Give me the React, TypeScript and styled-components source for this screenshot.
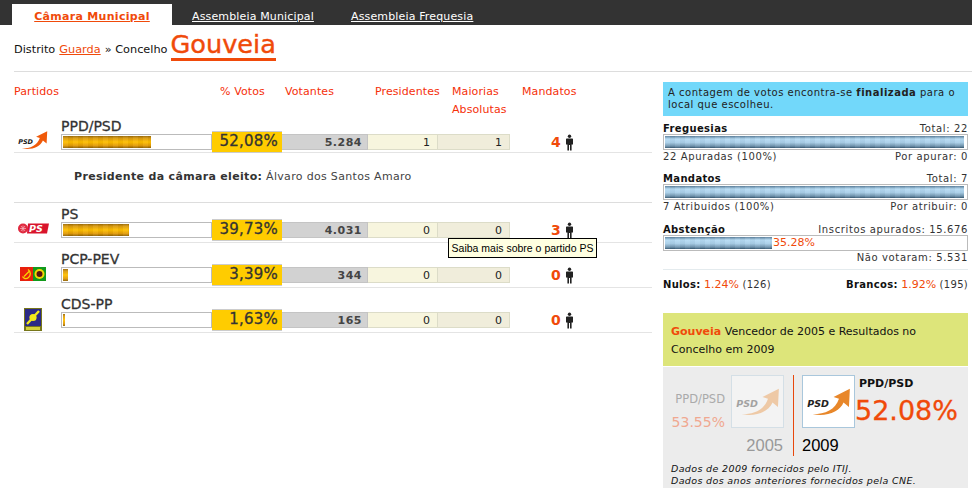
import React from 'react';
import styled, { createGlobalStyle } from 'styled-components';

const GlobalStyle = createGlobalStyle`
  html, body { margin: 0; padding: 0; background: #fff; }
  body {
    font-family: "DejaVu Sans", Verdana, sans-serif;
    font-size: 11px;
    color: #000;
    overflow: hidden;
  }
`;

const Page = styled.div`
  position: relative;
  width: 972px;
  height: 488px;
  overflow: hidden;
`;

const TopBar = styled.div`
  display: flex;
  align-items: flex-end;
  height: 25px;
  padding-left: 12px;
  background: #333;
`;

const Tab = styled.a<{ $active?: boolean }>`
  display: block;
  height: ${({ $active }) => ($active ? '21px' : '19px')};
  line-height: ${({ $active }) => ($active ? '25px' : '21px')};
  width: ${({ $active }) => ($active ? '160px' : 'auto')};
  margin-right: ${({ $active }) => ($active ? '20px' : '37px')};
  text-align: center;
  font-size: 11px;
  text-decoration: underline;
  font-weight: ${({ $active }) => ($active ? 700 : 400)};
  letter-spacing: ${({ $active }) => ($active ? '0.3px' : '0.15px')};
  color: ${({ $active }) => ($active ? '#f04a0a' : '#fff')};
  background: ${({ $active }) => ($active ? '#fff' : 'transparent')};
`;

const Crumbs = styled.div`
  display: flex;
  align-items: baseline;
  height: 46px;
  margin-left: 14px;
  line-height: 50px;
  font-size: 11.3px;
  color: #111;
  border-bottom: 1px solid #ddd;
`;

const CrumbLink = styled.a`
  margin: 0 4px;
  color: #f04a0a;
  text-decoration: underline;
`;

const Place = styled.a`
  height: 31px;
  margin-left: 3px;
  margin-top: 2px;
  font-size: 25.6px;
  line-height: 34px;
  color: #f04a0a;
  -webkit-text-stroke: 0.4px #f04a0a;
  border-bottom: 3px solid #f04a0a;
  align-self: flex-start;
`;

const Main = styled.div`
  display: flex;
  margin-left: 14px;
`;

const Results = styled.div`
  width: 638px;
`;

const columns = '47px 151px 70px 86px 70px 72px 85px';

const HeadRow = styled.div`
  display: grid;
  grid-template-columns: ${columns};
  height: 36px;
  padding-top: 11px;
`;

const HeadCell = styled.div<{ $span?: number; $pad?: number }>`
  grid-column: span ${({ $span }) => $span ?? 1};
  padding-left: ${({ $pad }) => $pad ?? 0}px;
  font-size: 11px;
  line-height: 18px;
  letter-spacing: 0.1px;
  color: #f5300a;
  white-space: nowrap;
`;

const Row = styled.div<{ $h: number }>`
  display: grid;
  grid-template-columns: ${columns};
  align-items: end;
  height: ${({ $h }) => $h}px;
  padding-bottom: 4px;
  box-sizing: border-box;
  border-bottom: 1px solid #e4e4e4;
`;

const LogoCell = styled.div<{ $lift: number }>`
  display: flex;
  align-items: flex-end;
  justify-content: center;
  width: 38px;
  height: 26px;
  margin-bottom: ${({ $lift }) => $lift}px;
`;

const PartyCell = styled.div`
  display: flex;
  flex-direction: column;
`;

const PartyName = styled.a`
  font-size: 14px;
  line-height: 14px;
  margin-bottom: 1px;
  color: #333;
  -webkit-text-stroke: 0.3px #333;
  white-space: nowrap;
`;

const Track = styled.div`
  height: 16px;
  box-sizing: border-box;
  padding: 1px;
  background: #fff;
  border: 1px solid #bbb;
`;

const Fill = styled.div<{ $tone: 'gold' | 'blue' }>`
  height: 12px;
  background:
    repeating-linear-gradient(90deg, rgba(255, 255, 255, 0.05) 0 5px, rgba(0, 0, 0, 0.03) 5px 10px),
    ${({ $tone }) =>
      $tone === 'gold'
        ? 'linear-gradient(#9a6a08 0, #d99a10 18%, #ffc000 50%, #e09a08 80%, #8f6205 100%)'
        : 'linear-gradient(#5a7f9c 0, #b7dcf4 25%, #a9cfe8 55%, #6f93ad 85%, #34566f 100%)'};
`;

const Cell = styled.div<{ $bg: string }>`
  height: 16px;
  box-sizing: border-box;
  padding-right: 7px;
  text-align: right;
  font-size: 11px;
  line-height: 15px;
  color: #222;
  background: ${({ $bg }) => $bg};
  border: 1px solid #dcdcc8;
  border-width: 1px 1px 1px 0;
`;

const Votes = styled(Cell)`
  font-weight: 700;
  letter-spacing: 0.5px;
  color: #444;
  padding-right: 5px;
  border-color: #c4c4c4;
`;

const Percent = styled.div`
  height: 22px;
  margin-bottom: -3px;
  box-sizing: border-box;
  padding-right: 4px;
  text-align: right;
  font-size: 15px;
  line-height: 19px;
  letter-spacing: 0.2px;
  color: #333;
  -webkit-text-stroke: 0.3px #333;
  background: #fc0;
  border-top: 1px solid #ccc;
  border-bottom: 1px solid #ccc;
`;

const SeatCell = styled.div`
  display: flex;
  align-items: center;
  justify-content: flex-start;
  height: 16px;
  padding-left: 41px;
  gap: 5px;
  font-size: 14px;
  font-weight: 700;
  color: #f04a0a;
`;

const PresidentRow = styled.div`
  height: 50px;
  box-sizing: border-box;
  padding: 16px 0 0 60px;
  font-size: 11px;
  line-height: 16px;
  letter-spacing: 0.32px;
  color: #444;
  border-bottom: 1px solid #ddd;

  strong {
    color: #333;
  }
`;

const Side = styled.aside`
  width: 305px;
  margin: 10px 0 0 11px;
`;

const Notice = styled.div`
  height: 34px;
  box-sizing: border-box;
  padding: 5px 5px 0;
  font-size: 10px;
  line-height: 12px;
  letter-spacing: 0.5px;
  color: #222;
  background: #72d8fa;
`;

const Stat = styled.div<{ $h: number }>`
  height: ${({ $h }) => $h}px;
  padding-top: 6px;
  box-sizing: border-box;
`;

const StatLine = styled.div`
  display: flex;
  justify-content: space-between;
  height: 12px;
  font-size: 10px;
  line-height: 14px;
  letter-spacing: 0.62px;
  color: #333;

  strong {
    letter-spacing: 0.35px;
    color: #111;
  }
`;

const StatTrack = styled(Track)`
  display: flex;
  align-items: center;
`;

const StatFill = styled(Fill)`
  flex: none;
`;

const Rate = styled.span`
  margin-left: 1px;
  font-size: 11px;
  line-height: 12px;
  color: #f04a0a;
`;

const Totals = styled.div`
  display: flex;
  justify-content: space-between;
  padding-top: 8px;
  font-size: 10px;
  line-height: 13px;
  letter-spacing: 0.3px;
  color: #333;
  border-top: 1px solid #e4ebee;

  strong {
    color: #111;
  }
  em {
    font-style: normal;
    font-size: 11px;
    letter-spacing: 0;
    color: #f04a0a;
  }
`;

const WinnerHead = styled.div`
  height: 53px;
  box-sizing: border-box;
  margin-top: 22px;
  padding: 10px 8px 0;
  font-size: 11px;
  line-height: 18px;
  color: #111;
  background: #dde57a;

  strong {
    color: #f04a0a;
  }
`;

const WinnerBody = styled.div`
  height: 130px;
  box-sizing: border-box;
  margin-top: 1px;
  padding: 8px 0 0 8px;
  background: #ececec;
`;

const Compare = styled.div`
  display: flex;
  height: 81px;
`;

const YearBlock = styled.div<{ $old?: boolean }>`
  display: grid;
  grid-template-columns: ${({ $old }) => ($old ? '60px 53px' : '53px 1fr')};
  grid-template-rows: 53px 28px;
  width: ${({ $old }) => ($old ? '123px' : '170px')};
  box-sizing: border-box;
  padding-left: ${({ $old }) => ($old ? '0' : '8px')};
  border-right: ${({ $old }) => ($old ? '1px solid #e8480c' : '0')};
`;

const OldStats = styled.div`
  padding: 17px 6px 0 0;
  text-align: right;
  font-size: 11.5px;
  line-height: 14px;
  color: #aaa;
`;

const OldPercent = styled.div`
  margin-top: 7px;
  font-size: 14px;
  line-height: 18px;
  color: #f0a890;
`;

const LogoBox = styled.div<{ $old?: boolean }>`
  display: flex;
  align-items: center;
  justify-content: center;
  width: 53px;
  height: 53px;
  box-sizing: border-box;
  background: ${({ $old }) => ($old ? '#f3f3f3' : '#fff')};
  border: 1px solid ${({ $old }) => ($old ? '#d4dfe6' : '#a9c7dc')};
`;

const Year = styled.div<{ $old?: boolean }>`
  grid-column: ${({ $old }) => ($old ? '1 / span 2' : '1')};
  padding: ${({ $old }) => ($old ? '0 1px 0 0' : '0')};
  text-align: ${({ $old }) => ($old ? 'right' : 'left')};
  font-family: "Liberation Sans", Arial, sans-serif;
  font-size: 16.5px;
  line-height: 34px;
  color: ${({ $old }) => ($old ? '#999' : '#000')};
`;

const NewStats = styled.div`
  padding-left: 4px;
  white-space: nowrap;
`;

const NewName = styled.div`
  font-size: 11px;
  font-weight: 700;
  line-height: 18px;
  color: #111;
`;

const NewPercent = styled.div`
  margin: 3px 0 0 -4px;
  font-size: 27px;
  line-height: 30px;
  color: #f04a0a;
  -webkit-text-stroke: 0.3px #f04a0a;
`;

const Source = styled.div`
  margin-top: 7px;
  font-size: 9.5px;
  font-style: italic;
  line-height: 12px;
  letter-spacing: 0.36px;
  color: #111;
`;

const Tooltip = styled.div`
  position: absolute;
  left: 448px;
  top: 238px;
  width: 149px;
  height: 20px;
  box-sizing: border-box;
  font-family: "Liberation Sans", Arial, sans-serif;
  font-size: 10.5px;
  line-height: 18px;
  text-align: center;
  white-space: nowrap;
  color: #000;
  background: #ffffe1;
  border: 1px solid #000;
`;

function Person() {
  return (
    <svg width="7" height="17" viewBox="0 0 7 16" aria-hidden="true">
      <circle cx="3.5" cy="1.7" r="1.7" fill="#222" />
      <path d="M0.6 4h5.8l.6.6v5.4H5.6V16H4V10.5H3V16H1.4V10H0V4.6z" fill="#222" />
    </svg>
  );
}

function PsdLogo({ size, faded }: { size: number; faded?: boolean }) {
  return (
    <svg width={size} height={size * 0.66} viewBox="0 0 48 32" aria-hidden="true" opacity={faded ? 0.38 : 1}>
      <path
        d="M6 30C20 30 31 25 35 13l-6-2L47 2l-1 20-6-5C36 27 22 33 6 30z"
        fill={size > 36 ? '#e8872a' : '#f05a0a'}
      />
      <text x="0" y="22" fontFamily="DejaVu Sans, sans-serif" fontSize="10.5" fontWeight="700" fontStyle="italic" fill="#222">
        PSD
      </text>
    </svg>
  );
}

function PsLogo() {
  return (
    <svg width="31" height="11" viewBox="0 0 31 11" aria-hidden="true">
      <circle cx="5" cy="5.5" r="5" fill="#e02a40" />
      <path d="M2 5.5h6M5 2.5v6M3 3l4 5M7 3l-4 5" stroke="#f6b7be" strokeWidth="0.7" />
      <path d="M10 0.5H31L29 10.5H9z" fill="#d9142c" />
      <text x="11" y="9" fontFamily="DejaVu Sans, sans-serif" fontSize="9.5" fontWeight="700" fontStyle="italic" fill="#fff">
        PS
      </text>
    </svg>
  );
}

function PcpLogo() {
  return (
    <svg width="26" height="14" viewBox="0 0 26 14" aria-hidden="true">
      <rect width="13" height="14" fill="#e8200c" />
      <path d="M4 9.5l5-5M8 2.5c3 2 3 6 .5 8s-5 1-6-1" fill="none" stroke="#f7d500" strokeWidth="1.3" />
      <rect x="13" width="13" height="14" fill="#129a1c" />
      <circle cx="19.5" cy="7" r="5" fill="#f2d800" />
      <circle cx="19.5" cy="7" r="3" fill="#5a1410" />
    </svg>
  );
}

function CdsLogo() {
  return (
    <svg width="18" height="23" viewBox="0 0 18 23" aria-hidden="true">
      <rect width="18" height="23" fill="#77761a" />
      <rect x="1" y="1" width="16" height="17" fill="#2b2a86" />
      <path d="M3 16L15 3" stroke="#f2ea1a" strokeWidth="2.4" />
      <circle cx="9" cy="9.5" r="3.6" fill="#f2ea1a" />
      <rect x="2" y="19" width="14" height="3" fill="#d4d23a" />
    </svg>
  );
}

const parties = [
  { name: 'PPD/PSD', logo: <PsdLogo size={30} />, lift: 0, fill: 88, pct: '52,08%', votes: '5.284', pres: 1, maj: 1, seats: 4, h: 34 },
  { name: 'PS', logo: <PsLogo />, lift: 4, fill: 66, pct: '39,73%', votes: '4.031', pres: 0, maj: 0, seats: 3, h: 40 },
  { name: 'PCP-PEV', logo: <PcpLogo />, lift: 2, fill: 5, pct: '3,39%', votes: '344', pres: 0, maj: 0, seats: 0, h: 45 },
  { name: 'CDS-PP', logo: <CdsLogo />, lift: -3, fill: 2, pct: '1,63%', votes: '165', pres: 0, maj: 0, seats: 0, h: 45 },
];

function App() {
  return (
    <Page>
      <GlobalStyle />
      <TopBar>
        <Tab $active>Câmara Municipal</Tab>
        <Tab>Assembleia Municipal</Tab>
        <Tab>Assembleia Frequesia</Tab>
      </TopBar>
      <Crumbs>
        Distrito <CrumbLink>Guarda</CrumbLink> » Concelho <Place>Gouveia</Place>
      </Crumbs>
      <Main>
        <Results>
          <HeadRow>
            <HeadCell $span={2}>Partidos</HeadCell>
            <HeadCell $pad={8}>% Votos</HeadCell>
            <HeadCell $pad={3}>Votantes</HeadCell>
            <HeadCell $pad={7}>Presidentes</HeadCell>
            <HeadCell $pad={14}>Maiorias<br />Absolutas</HeadCell>
            <HeadCell $pad={12}>Mandatos</HeadCell>
          </HeadRow>
          {parties.map((p) => (
            <React.Fragment key={p.name}>
              <Row $h={p.h}>
                <LogoCell $lift={p.lift}>{p.logo}</LogoCell>
                <PartyCell>
                  <PartyName>{p.name}</PartyName>
                  <Track>
                    <Fill $tone="gold" style={{ width: `${p.fill}px` }} />
                  </Track>
                </PartyCell>
                <Percent>{p.pct}</Percent>
                <Votes $bg="#d2d2d2">{p.votes}</Votes>
                <Cell $bg="#f7f5de">{p.pres}</Cell>
                <Cell $bg="#f0eddb">{p.maj}</Cell>
                <SeatCell>
                  {p.seats}
                  <Person />
                </SeatCell>
              </Row>
              {p.name === 'PPD/PSD' && (
                <PresidentRow>
                  <strong>Presidente da câmara eleito:</strong> Álvaro dos Santos Amaro
                </PresidentRow>
              )}
            </React.Fragment>
          ))}
        </Results>
        <Side>
          <Notice>
            A contagem de votos encontra-se <strong>finalizada</strong> para o local que escolheu.
          </Notice>
          <Stat $h={50}>
            <StatLine><strong>Freguesias</strong><span>Total: 22</span></StatLine>
            <StatTrack><StatFill $tone="blue" style={{ width: '299px' }} /></StatTrack>
            <StatLine><span>22 Apuradas (100%)</span><span>Por apurar: 0</span></StatLine>
          </Stat>
          <Stat $h={51}>
            <StatLine><strong>Mandatos</strong><span>Total: 7</span></StatLine>
            <StatTrack><StatFill $tone="blue" style={{ width: '299px' }} /></StatTrack>
            <StatLine><span>7 Atribuidos (100%)</span><span>Por atribuir: 0</span></StatLine>
          </Stat>
          <Stat $h={52}>
            <StatLine><strong>Abstenção</strong><span>Inscritos apurados: 15.676</span></StatLine>
            <StatTrack><StatFill $tone="blue" style={{ width: '107px' }} /><Rate>35.28%</Rate></StatTrack>
            <StatLine><span /><span>Não votaram: 5.531</span></StatLine>
          </Stat>
          <Totals>
            <span><strong>Nulos:</strong> <em>1.24%</em> (126)</span>
            <span><strong>Brancos:</strong> <em>1.92%</em> (195)</span>
          </Totals>
          <WinnerHead>
            <strong>Gouveia</strong> Vencedor de 2005 e Resultados no Concelho em 2009
          </WinnerHead>
          <WinnerBody>
            <Compare>
              <YearBlock $old>
                <OldStats>
                  PPD/PSD
                  <OldPercent>53.55%</OldPercent>
                </OldStats>
                <LogoBox $old><PsdLogo size={44} faded /></LogoBox>
                <Year $old>2005</Year>
              </YearBlock>
              <YearBlock>
                <LogoBox><PsdLogo size={44} /></LogoBox>
                <NewStats>
                  <NewName>PPD/PSD</NewName>
                  <NewPercent>52.08%</NewPercent>
                </NewStats>
                <Year>2009</Year>
              </YearBlock>
            </Compare>
            <Source>
              Dados de 2009 fornecidos pelo ITIJ.<br />
              Dados dos anos anteriores fornecidos pela CNE.
            </Source>
          </WinnerBody>
        </Side>
      </Main>
      <Tooltip>Saiba mais sobre o partido PS</Tooltip>
    </Page>
  );
}

export default App;
